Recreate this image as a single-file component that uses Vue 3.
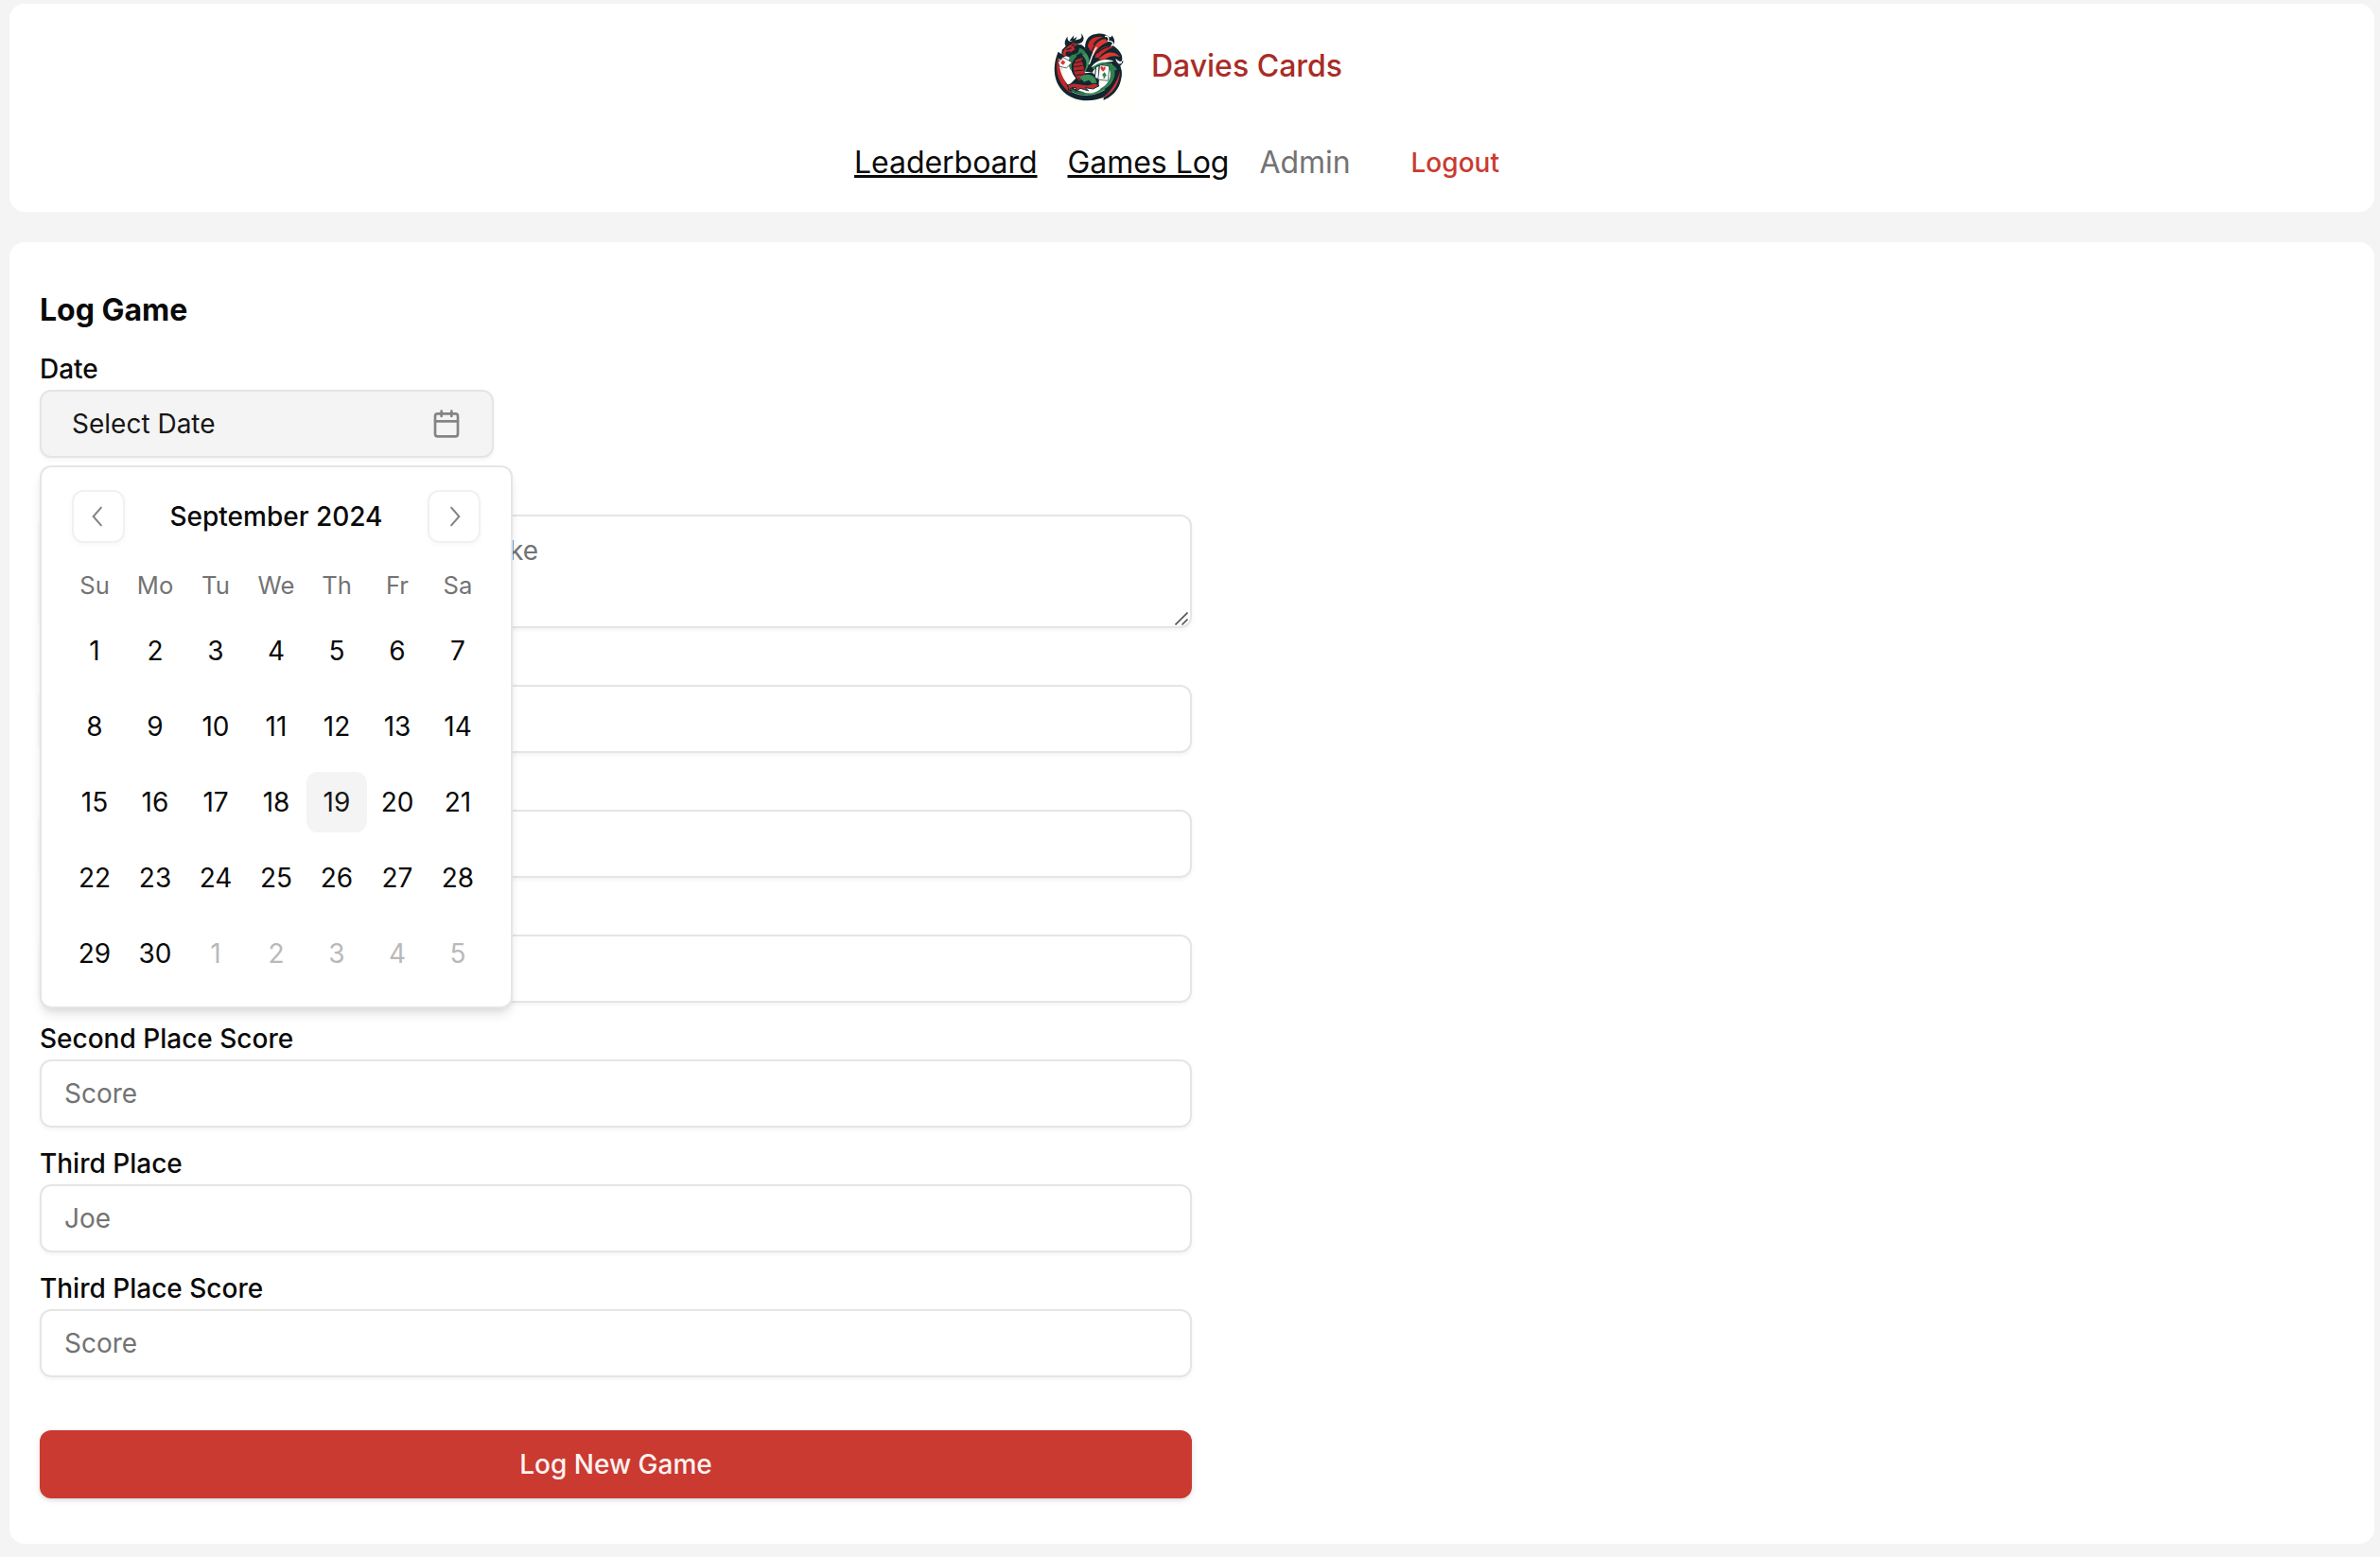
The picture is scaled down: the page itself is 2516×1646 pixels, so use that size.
<script setup>
const weekdays = ['Su', 'Mo', 'Tu', 'We', 'Th', 'Fr', 'Sa']
const days = Array.from({ length: 35 }, (_, i) => ({
  label: i < 30 ? i + 1 : i - 29,
  outside: i >= 30,
  today: i === 18,
}))
// The first three fields sit behind the open calendar, so their text stays empty.
const fields = [
  { label: '', placeholder: '' },
  { label: '', placeholder: '' },
  { label: '', placeholder: '' },
  { label: 'Second Place Score', placeholder: 'Score' },
  { label: 'Third Place', placeholder: 'Joe' },
  { label: 'Third Place Score', placeholder: 'Score' },
]
</script>

<template>
  <div class="page">
    <header class="card header">
      <div class="brand">
        <svg class="logo" viewBox="3 0 300 300">
          <rect x="3" width="300" height="300" fill="#fffffc" />
          <!-- coiled tail -->
          <path d="M56 104C32 160 44 222 98 248C150 272 214 256 246 210C262 186 260 158 246 136L214 128C240 150 240 190 214 214C174 244 112 238 84 200C66 176 62 146 70 114Z" fill="#12262e" />
          <path d="M55 122C44 168 58 212 98 236C84 208 66 186 62 130Z" fill="#c3272b" />
          <path d="M62 128C60 164 72 192 98 218" fill="none" stroke="#fff" stroke-width="5" />
          <path d="M84 214C112 246 182 250 218 210C246 180 240 146 206 134L184 140C220 140 236 178 206 210C170 242 112 236 84 214Z" fill="#2f8050" />
          <path d="M98 230C130 248 172 244 204 224" fill="none" stroke="#79b98b" stroke-width="3" />
          <path d="M200 258C238 242 262 208 256 160C248 200 232 230 200 250Z" fill="#12262e" />
          <path d="M192 254C230 238 250 208 252 166C242 204 222 232 192 254Z" fill="#d03438" />
          <!-- wings -->
          <path d="M142 100C138 72 150 50 176 48C194 44 210 50 216 56C222 60 226 58 226 52C236 64 238 78 228 84C246 94 262 112 262 138L252 150C236 140 214 142 200 146C186 148 172 154 164 170L134 166C150 144 148 120 142 100Z" fill="#12262e" />
          <path d="M150 88C152 62 174 52 200 58C184 66 170 80 160 104Z" fill="#cc2b2c" />
          <path d="M164 104C174 78 188 64 206 64L212 74C194 80 178 94 168 118Z" fill="#dc3934" />
          <path d="M172 122C186 92 208 80 230 90C214 96 196 108 184 124Z" fill="#c92a2b" />
          <path d="M184 128C204 104 232 98 252 120C232 114 214 120 204 128Z" fill="#dc3934" />
          <path d="M168 82C176 70 188 62 200 60M180 108C190 98 206 90 218 88" fill="none" stroke="#12262e" stroke-width="4" />
          <path d="M204 56C212 52 220 62 214 70C230 70 234 78 224 86M154 144C162 124 164 108 178 90" fill="none" stroke="#fff" stroke-width="4" />
          <path d="M260 116C268 134 252 144 240 128C244 142 250 144 258 138" fill="#fff" stroke="#fff" stroke-width="3" />
          <path d="M160 154C178 130 202 124 232 134C212 138 196 136 176 148" fill="#fff" />
          <path d="M166 158C190 134 224 138 240 162" fill="none" stroke="#2f8050" stroke-width="7" />
          <!-- neck and body -->
          <path d="M98 84C122 74 146 88 150 112C158 136 148 154 140 172L164 170L186 190L184 216L108 218L94 206L112 188C86 158 98 132 112 112Z" fill="#12262e" />
          <path d="M112 130C98 152 104 174 122 196L142 186C144 162 130 146 134 122Z" fill="#b9262a" />
          <path d="M106 140L134 134M104 152L134 148M106 165L138 162M112 178L142 176M120 190L142 186" stroke="#12262e" stroke-width="3" />
          <path d="M106 98C122 86 142 96 144 112L126 112C104 124 94 144 98 166C82 142 88 120 104 110Z" fill="#30804f" />
          <path d="M132 114C154 136 144 154 138 172C158 146 160 128 144 108Z" fill="#41935f" />
          <path d="M124 186C142 170 162 176 174 188L178 204L166 208L154 194L138 200Z" fill="#3c8e5a" />
          <path d="M104 112L118 102M114 118L130 108M130 128L138 144" stroke="#12262e" stroke-width="4" />
          <!-- claws -->
          <path d="M132 230Q158 244 188 224L196 206L184 210L174 222L152 226Z" fill="#fff" />
          <path d="M86 210Q104 200 122 206L148 210L174 204L186 212L166 222L142 218L152 228L126 220L112 230L112 218L98 218L90 228Z" fill="#bd2b2d" stroke="#12262e" stroke-width="3" />
          <!-- head and horns -->
          <path d="M66 124L68 98L80 86C74 76 78 64 86 56C84 68 90 74 102 70L124 64C132 60 132 54 128 46C142 58 138 74 124 78L112 82L130 82L144 94L124 92L118 108L100 114L92 122L82 118Z" fill="#12262e" />
          <path d="M92 68L106 52L104 64L116 56L108 72Z" fill="#12262e" />
          <path d="M70 114L74 98L88 86L104 76L118 80L104 90L110 96L96 106L82 108L78 120Z" fill="#c9292c" />
          <path d="M82 98L98 92M80 108L94 104M98 84L108 82" stroke="#12262e" stroke-width="4" />
          <!-- cards -->
          <path d="M56 138L72 122L100 138L82 156L60 150Z" fill="#fff" stroke="#12262e" stroke-width="2" />
          <path d="M70 130L79 137L72 146L63 140Z" fill="#e03832" />
          <path d="M176 152L186 148L184 192L172 186Z" fill="#fff" stroke="#12262e" stroke-width="3" />
          <path d="M188 146L218 150L214 196L182 192Z" fill="#fff" stroke="#12262e" stroke-width="2" />
          <path d="M198 167C188 158 189 150 194 150Q198 150 199 155Q202 150 205 152C209 156 203 163 198 167Z" fill="#e03832" />
          <path d="M203 169L209 178Q209 184 204 182L206 188H198L201 182Q195 183 196 176Z" fill="#2f8050" />
        </svg>
        <span class="brand-name">Davies Cards</span>
      </div>
      <nav class="nav">
        <a class="link">Leaderboard</a>
        <a class="link">Games Log</a>
        <span class="muted">Admin</span>
        <button class="logout">Logout</button>
      </nav>
    </header>

    <main class="card main">
      <h1>Log Game</h1>
      <form class="form">
        <div class="field date-field">
          <label>Date</label>
          <div class="date-button">
            <span>Select Date</span>
            <svg class="cal-icon" viewBox="0 0 24 24">
              <path d="M8 2v4M16 2v4M3 10h18" />
              <rect x="3" y="4" width="18" height="18" rx="2" />
            </svg>
          </div>
          <div class="popover">
            <div class="caption">
              <span class="nav-button">
                <svg viewBox="0 0 15 15"><path d="M8.84 3.14 5 7.5 8.84 11.86" /></svg>
              </span>
              <span class="month">September 2024</span>
              <span class="nav-button">
                <svg viewBox="0 0 15 15"><path d="M6.16 3.14 10 7.5 6.16 11.86" /></svg>
              </span>
            </div>
            <div class="weekdays">
              <span v-for="w in weekdays" :key="w">{{ w }}</span>
            </div>
            <div class="days">
              <span
                v-for="(d, i) in days"
                :key="i"
                class="day"
                :class="{ outside: d.outside, today: d.today }"
              >{{ d.label }}</span>
            </div>
          </div>
        </div>

        <div class="field">
          <label></label>
          <div class="textarea">
            <span class="note">ke</span>
            <svg class="grip" viewBox="0 0 14 14"><path d="M.5 13.5 13.5.5M7.5 13.5l6-6" /></svg>
          </div>
        </div>

        <div v-for="(f, i) in fields" :key="i" class="field">
          <label>{{ f.label }}</label>
          <div class="input">{{ f.placeholder }}</div>
        </div>

        <button type="button" class="submit">Log New Game</button>
      </form>
    </main>
  </div>
</template>

<style>
body {
  background: #f4f4f4;
}
</style>

<style scoped>
.page {
  box-sizing: border-box;
  height: 1646px;
  padding: 4px 6px 14px 10px;
  display: flex;
  flex-direction: column;
  gap: 32px;
  background: #f4f4f4;
  color: #0a0a0a;
  font-family: Inter, "Liberation Sans", sans-serif;
  font-size: 28px;
  line-height: 40px;
}
.page * {
  box-sizing: border-box;
}
.card {
  background: #fff;
  border-radius: 16px;
}
.header {
  height: 220px;
  padding-top: 16px;
  display: flex;
  flex-direction: column;
  align-items: center;
  gap: 16px;
}
.brand {
  display: flex;
  align-items: center;
  gap: 16px;
}
.logo {
  width: 100px;
  height: 100px;
}
.brand-name {
  color: #a92c26;
  font-size: 32px;
  font-weight: 500;
}
.nav {
  height: 72px;
  display: flex;
  align-items: center;
  gap: 32px;
  font-size: 32px;
  letter-spacing: -0.05px;
}
.link {
  text-decoration: underline;
}
.muted {
  color: #737373;
}
.logout {
  height: 72px;
  padding: 0 32px;
  border: 0;
  background: none;
  color: #ca3a31;
  font: inherit;
  font-size: 28px;
  font-weight: 500;
}
.main {
  flex: 1;
  padding: 48px 32px;
}
h1 {
  margin: 0 0 24px;
  font-size: 32px;
  line-height: 48px;
  font-weight: 700;
}
.form {
  width: 1218px;
  display: flex;
  flex-direction: column;
  gap: 24px;
}
.field {
  display: flex;
  flex-direction: column;
  gap: 8px;
}
.date-field {
  position: relative;
}
label {
  height: 28px;
  line-height: 28px;
  font-weight: 500;
}
.input,
.textarea,
.date-button {
  height: 72px;
  padding: 14px 24px;
  border: 2px solid #e5e5e5;
  border-radius: 12px;
  box-shadow: 0 2px 4px rgba(0, 0, 0, 0.05);
  color: #737373;
}
.date-button {
  width: 480px;
  padding: 0 32px;
  display: flex;
  align-items: center;
  justify-content: space-between;
  background: #f4f4f4;
  color: #171717;
}
.cal-icon {
  width: 32px;
  height: 32px;
  fill: none;
  stroke: #171717;
  stroke-width: 2;
  stroke-linecap: round;
  stroke-linejoin: round;
  opacity: 0.5;
}
.textarea {
  position: relative;
  height: 120px;
  padding-top: 16px;
}
.note {
  display: block;
  width: 501px;
  text-align: right;
  white-space: nowrap;
}
.grip {
  position: absolute;
  right: 2px;
  bottom: 1px;
  width: 14px;
  height: 14px;
  fill: none;
  stroke: #555;
  stroke-width: 1.6;
}
.popover {
  position: absolute;
  z-index: 1;
  top: 116px;
  left: 0;
  width: 500px;
  height: 574px;
  padding: 24px;
  border: 2px solid #e5e5e5;
  border-radius: 12px;
  background: #fff;
  box-shadow: 0 8px 12px -2px rgba(0, 0, 0, 0.1), 0 4px 8px -4px rgba(0, 0, 0, 0.1);
}
.caption {
  height: 56px;
  padding: 0 8px;
  display: flex;
  align-items: center;
  justify-content: space-between;
}
.month {
  font-weight: 500;
}
.nav-button {
  width: 56px;
  height: 56px;
  display: flex;
  align-items: center;
  justify-content: center;
  border: 2px solid #e5e5e5;
  border-radius: 12px;
  box-shadow: 0 2px 4px rgba(0, 0, 0, 0.05);
  opacity: 0.5;
}
.nav-button svg {
  width: 32px;
  height: 32px;
  fill: none;
  stroke: #0a0a0a;
  stroke-width: 0.95;
  stroke-linecap: round;
}
.weekdays,
.days {
  display: grid;
  grid-template-columns: repeat(7, 64px);
}
.weekdays {
  margin-top: 25px;
  height: 41px;
  color: #737373;
  font-size: 25.6px;
  text-align: center;
}
.days {
  margin-top: 16px;
  row-gap: 16px;
}
.day {
  height: 64px;
  display: flex;
  align-items: center;
  justify-content: center;
  border-radius: 12px;
}
.today {
  background: #f4f4f4;
  color: #171717;
}
.outside {
  color: #b9b9b9;
}
.submit {
  height: 72px;
  margin-top: 32px;
  border: 0;
  border-radius: 12px;
  background: #ca3a31;
  box-shadow: 0 2px 6px rgba(0, 0, 0, 0.12), 0 2px 4px -2px rgba(0, 0, 0, 0.1);
  color: #fef2f2;
  font: inherit;
  font-weight: 500;
}
</style>
